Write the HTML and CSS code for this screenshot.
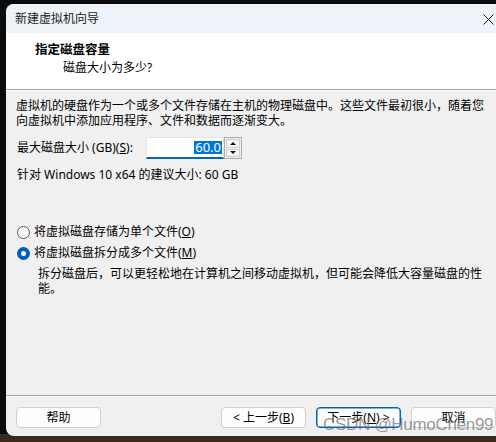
FILE: index.html
```html
<!DOCTYPE html>
<html lang="zh-CN">
<head>
<meta charset="utf-8">
<title>新建虚拟机向导</title>
<link rel="stylesheet" href="styles.css">
</head>
<body>
<div class="screen">
  <div class="window">
    <div class="titlebar">
      <span class="title">新建虚拟机向导</span>
      <svg class="close" width="11" height="11" viewBox="0 0 11 11"><path d="M0.5 0.5 L10.5 10.5 M10.5 0.5 L0.5 10.5" stroke="#1b1b1b" stroke-width="1" fill="none"/></svg>
    </div>
    <div class="header">
      <div class="h-title">指定磁盘容量</div>
      <div class="h-sub">磁盘大小为多少?</div>
    </div>
    <div class="content">
      <p class="intro">虚拟机的硬盘作为一个或多个文件存储在主机的物理磁盘中。这些文件最初很小，随着您<br>向虚拟机中添加应用程序、文件和数据而逐渐变大。</p>
      <div class="size-row">
        <span class="size-label">最大磁盘大小 (GB)(<u>S</u>):</span>
        <div class="field"><span class="sel">60.0</span></div>
        <div class="spinner">
          <span class="spin-btn"><span class="tri-up"></span></span>
          <span class="spin-btn"><span class="tri-down"></span></span>
        </div>
      </div>
      <p class="rec">针对 Windows 10 x64 的建议大小: 60 GB</p>
      <div class="radio first"><span class="circle"></span><span>将虚拟磁盘存储为单个文件(<u>O</u>)</span></div>
      <div class="radio"><span class="circle checked"></span><span>将虚拟磁盘拆分成多个文件(<u>M</u>)</span></div>
      <p class="desc">拆分磁盘后，可以更轻松地在计算机之间移动虚拟机，但可能会降低大容量磁盘的性<br>能。</p>
    </div>
    <div class="footer">
      <span class="btn">帮助</span>
      <div class="nav">
        <span class="btn">&lt; 上一步(<u>B</u>)</span>
        <span class="btn primary">下一步(<u>N</u>) &gt;</span>
        <span class="btn">取消</span>
      </div>
    </div>
  </div>
  <div class="watermark">CSDN @HumoChen99</div>
</div>
</body>
</html>
```

FILE: styles.css
```css
html, body {
  margin: 0;
  padding: 0;
  width: 496px;
  height: 442px;
  overflow: hidden;
  background: #0b0b0d;
}
.screen {
  position: relative;
  width: 496px;
  height: 442px;
  overflow: hidden;
  padding: 4px 0 0 6px;
  box-sizing: border-box;
  background: linear-gradient(to bottom, #0b0b0d 0, #0b0b0d 434px, #3a2a1d 434px);
  font-family: "Noto Sans", "Noto Sans CJK SC", sans-serif;
  font-size: 12px;
  color: #000;
}
.window {
  width: 500px;
  height: 432px;
  border-radius: 8px 0 0 8px;
  overflow: hidden;
  background: #f0f0f0;
  display: flex;
  flex-direction: column;
}
.titlebar {
  height: 29px;
  flex: none;
  background: #eef2f9;
  display: flex;
  align-items: center;
  justify-content: space-between;
  padding: 0 12px 0 9px;
}
.title {
  font-size: 12px;
  line-height: 16px;
  color: #1a1a1a;
  margin-top: 1px;
}
.close { display: block; margin-top: 1px; }
.header {
  height: 57px;
  flex: none;
  background: #fff;
  border-bottom: 1px solid #a0a0a0;
  box-shadow: 0 1px 0 #fff;
  box-sizing: border-box;
  padding: 9px 0 0 29px;
}
.h-title {
  font-weight: bold;
  font-size: 12.5px;
  line-height: 16px;
}
.h-sub {
  line-height: 16px;
  margin: 2px 0 0 28px;
}
.content {
  flex: 1;
  padding: 0 0 0 10px;
  border-bottom: 1px solid #a0a0a0;
  box-shadow: 0 1px 0 #fff;
}
p { margin: 0; }
.intro {
  margin-top: 8px;
  line-height: 15px;
  white-space: nowrap;
}
.size-row {
  margin-top: 9px;
  display: flex;
  align-items: stretch;
  height: 22px;
}
.size-label {
  width: 129px;
  flex: none;
  line-height: 22px;
  padding-left: 1px;
}
.field {
  width: 78px;
  height: 22px;
  box-sizing: border-box;
  background: #fff;
  border: 1px solid #e4e4e4;
  border-bottom: 2px solid #0067c0;
  display: flex;
  align-items: center;
  justify-content: flex-end;
  padding-right: 1px;
}
.sel {
  background: #0078d7;
  color: #fff;
  font-family: "Noto Sans", sans-serif;
  font-size: 13px;
  line-height: 13px;
  padding: 0 1px;
}
.spinner {
  width: 18px;
  height: 22px;
  box-sizing: border-box;
  border: 1px solid #adadad;
  padding: 1px;
  display: flex;
  flex-direction: column;
  gap: 1px;
  background: #f0f0f0;
}
.spin-btn {
  flex: 1;
  border: 1px solid #cfcfcf;
  background: #f5f5f5;
  display: flex;
  align-items: center;
  justify-content: center;
}
.tri-up, .tri-down {
  width: 0; height: 0;
  border-left: 3px solid transparent;
  border-right: 3px solid transparent;
}
.tri-up { border-bottom: 3px solid #111; }
.tri-down { border-top: 3px solid #111; }
.rec {
  margin-top: 8px;
  line-height: 15px;
  padding-left: 1px;
}
.radio {
  display: flex;
  align-items: center;
  height: 16px;
  line-height: 16px;
  gap: 4px;
  margin-top: 5px;
  padding-left: 1px;
}
.radio.first { margin-top: 42px; }
.circle {
  width: 13px;
  height: 13px;
  box-sizing: border-box;
  border-radius: 50%;
  border: 1px solid #595959;
  background: #fafafa;
  flex: none;
}
.circle.checked {
  border: 4px solid #005fb8;
  background: #fff;
}
.desc {
  margin: 5px 0 0 22px;
  line-height: 15px;
  white-space: nowrap;
}
.footer {
  height: 39px;
  flex: none;
  box-sizing: border-box;
  padding: 10px 10px 0 10px;
  display: flex;
  align-items: flex-start;
  margin-top: 1px;
}
.nav {
  margin-left: auto;
  display: flex;
  gap: 10px;
}
.btn {
  width: 85px;
  height: 21px;
  box-sizing: border-box;
  border: 1px solid #d0d0d0;
  border-radius: 4px;
  background: #fdfdfd;
  display: flex;
  align-items: center;
  justify-content: center;
  line-height: 16px;
}
.btn.primary {
  border: 1px solid #005fb8;
  box-shadow: inset 0 0 0 0.5px #005fb8;
}
.watermark {
  position: absolute;
  left: 323px;
  top: 415px;
  font-family: "Liberation Sans", Arial, sans-serif;
  font-size: 17px;
  letter-spacing: -0.3px;
  color: rgba(110, 110, 110, 0.7);
  white-space: nowrap;
}
```
